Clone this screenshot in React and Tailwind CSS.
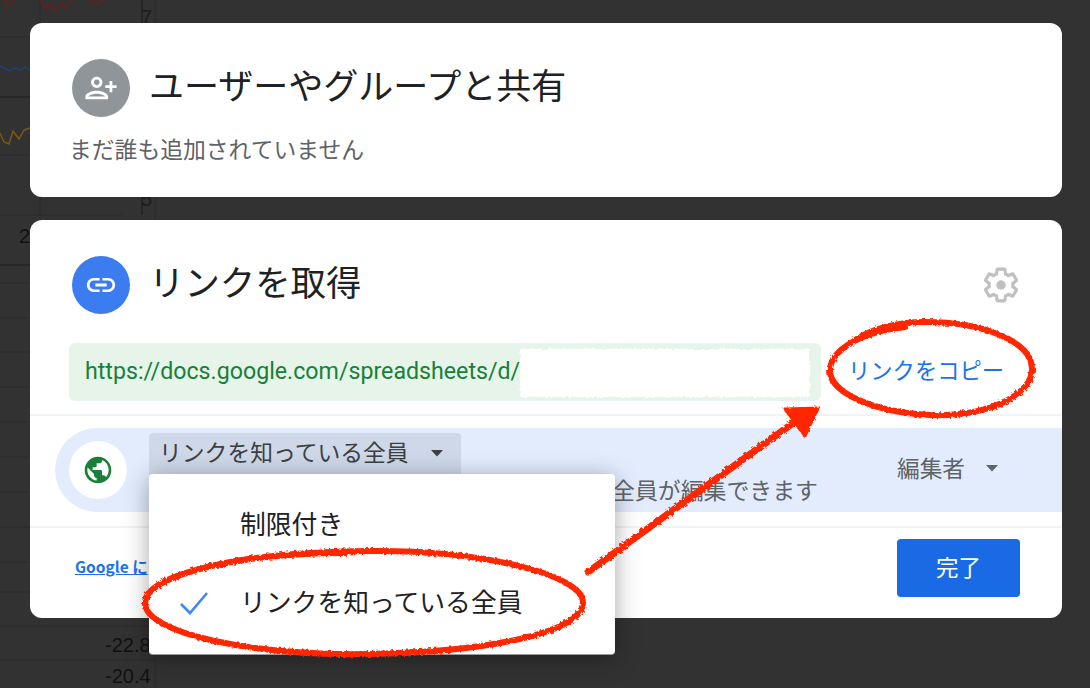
import React from "react";

const CJK = "font-['Noto_Sans_CJK_JP','Noto_Sans_CJK_SC',sans-serif]";

function Backdrop() {
  return (
    <svg className="absolute left-0 top-0" width="160" height="688" viewBox="0 0 160 688">
      <g stroke="#2a2a2a" strokeWidth="1">
        <line x1="0" y1="37" x2="142" y2="37" />
        <line x1="0" y1="155" x2="142" y2="155" />
        <line x1="40" y1="0" x2="40" y2="215" />
        <line x1="0" y1="215" x2="122" y2="215" />
        {[283, 318, 352, 387, 422, 457, 492, 527, 562, 592, 626, 660].map((y) => (
          <line key={y} x1="0" y1={y} x2="155" y2={y} />
        ))}
      </g>
      <line x1="0" y1="97" x2="142" y2="97" stroke="#1c1c1c" strokeWidth="1" />
      <line x1="0" y1="265" x2="155" y2="265" stroke="#1c1c1c" strokeWidth="1" />
      <line x1="142" y1="0" x2="142" y2="215" stroke="#222" strokeWidth="1.5" />
      <line x1="155" y1="0" x2="155" y2="688" stroke="#2a2a2a" strokeWidth="1" />
      <path d="M4 0 L9 6 L14 0 M40 0 L46 9 L50 4 L54 12 L60 3 L66 8 L72 0 M90 0 L96 4 L104 0" fill="none" stroke="#6b1f1a" strokeWidth="1.5" />
      <path d="M0 66 L5 68 L10 71 L15 68 L20 70 L25 67 L30 70" fill="none" stroke="#1d3f7a" strokeWidth="1.5" />
      <path d="M0 133 L4 142 L9 144 L13 131 L19 139 L24 130 L30 128" fill="none" stroke="#7a5a10" strokeWidth="1.5" />
    </svg>
  );
}

function Circle({ color, d, flip }) {
  return (
    <div className={`w-[58px] h-[58px] rounded-full flex items-center justify-center shrink-0 ${color}`}>
      <svg width="34" height="34" viewBox="0 0 24 24" fill="#fff" className={flip ? "-scale-x-100" : ""}>
        <path d={d} />
      </svg>
    </div>
  );
}

function Caret({ color }) {
  return (
    <svg width="14" height="8" viewBox="0 0 14 8">
      <path d="M1 1h12l-6 6.5z" fill={color} />
    </svg>
  );
}

function Annotations() {
  return (
    <svg className="absolute left-0 top-0 pointer-events-none" width="1090" height="688" viewBox="0 0 1090 688">
      <defs>
        <filter id="rough" x="-5%" y="-5%" width="110%" height="110%">
          <feTurbulence type="fractalNoise" baseFrequency="0.35" numOctaves="2" seed="4" />
          <feDisplacementMap in="SourceGraphic" scale="4" />
        </filter>
      </defs>
      <g filter="url(#rough)" fill="none" stroke="#ff2600" strokeWidth="6" strokeLinecap="round">
        <path d="M905 327 C860 332 831 350 830 370 C829 391 870 412 930 415 C990 417 1033 394 1032 368 C1031 342 985 322 925 322 C895 322 870 330 855 340" />
        <path d="M345 553 C240 553 145 575 145 603 C145 633 250 656 370 654 C490 652 584 632 583 602 C582 574 480 550 370 551 C300 552 230 558 190 572" />
        <path d="M588 572 L800 418" strokeWidth="7" />
        <path d="M785 409 L818 408 L805 436 Z" fill="#ff2600" strokeWidth="3" />
      </g>
      <g filter="url(#rough)">
        <rect x="520" y="349" width="290" height="48" fill="#fff" />
      </g>
    </svg>
  );
}

export default function App() {
  return (
    <div className={`relative w-[1090px] h-[688px] overflow-hidden bg-[#323232] ${CJK}`}>
      <Backdrop />
      <div className="absolute left-[141px] top-[5px] leading-[24px] text-[#1c1c1c] text-[20px] font-['Liberation_Sans',sans-serif]">7</div>
      <div className="absolute left-[141px] top-[187px] leading-[24px] text-[#1c1c1c] text-[20px] font-['Liberation_Sans',sans-serif]">5</div>
      <div className="absolute left-[19px] top-[224px] leading-[24px] text-[#111] text-[20px] font-['Liberation_Sans',sans-serif]">2</div>
      <div className="absolute left-[105px] top-[633px] leading-[24px] text-[#111] text-[20px] font-['Liberation_Sans',sans-serif]">-22.8</div>
      <div className="absolute left-[105px] top-[664px] leading-[24px] text-[#111] text-[20px] font-['Liberation_Sans',sans-serif]">-20.4</div>

      <div className="relative flex flex-col gap-[23px] pt-[23px] pl-[30px] w-[1062px]">
        <section className="h-[174px] bg-white rounded-[12px] pt-[36px] px-[42px]">
          <div className="flex items-center gap-[20px]">
            <Circle
              color="bg-[#909599]"
              flip
              d="M15 12c2.21 0 4-1.79 4-4s-1.79-4-4-4-4 1.79-4 4 1.79 4 4 4zm0-6c1.1 0 2 .9 2 2s-.9 2-2 2-2-.9-2-2 .9-2 2-2zm0 8c-2.67 0-8 1.34-8 4v2h16v-2c0-2.66-5.33-4-8-4zm-6 4c.22-.72 3.31-2 6-2 2.7 0 5.8 1.29 6 2H9zm-3-3v-3h3v-2H6V7H4v3H1v2h3v3h2z"
            />
            <h2 className="-mt-[8px] -ml-[1px] text-[35px] leading-[58px] text-[#202124] whitespace-nowrap">ユーザーやグループと共有</h2>
          </div>
          <p className="mt-[15px] -ml-[3px] text-[22.8px] leading-[34px] text-[#5f6368] whitespace-nowrap">まだ誰も追加されていません</p>
        </section>

        <section className="h-[398px] bg-white rounded-[12px] pt-[36px]">
          <div className="flex items-center gap-[20px] pl-[42px] pr-[42px]">
            <Circle
              color="bg-[#3b7cf0]"
              d="M3.9 12c0-1.71 1.39-3.1 3.1-3.1h4V7H7c-2.76 0-5 2.24-5 5s2.24 5 5 5h4v-1.9H7c-1.71 0-3.1-1.39-3.1-3.1zM8 13h8v-2H8v2zm9-6h-4v1.9h4c1.71 0 3.1 1.39 3.1 3.1s-1.39 3.1-3.1 3.1h-4V17h4c2.76 0 5-2.24 5-5s-2.24-5-5-5z"
            />
            <h2 className="flex-1 -mt-[8px] -ml-[1px] text-[35.4px] leading-[58px] text-[#202124] whitespace-nowrap">リンクを取得</h2>
            <svg width="38" height="38" viewBox="0 0 24 24" fill="none" stroke="#c0c0c0" strokeWidth="2">
              <path d="M19.43 12.98c.04-.32.07-.64.07-.98s-.03-.66-.07-.98l2.11-1.65c.19-.15.24-.42.12-.64l-2-3.46c-.12-.22-.39-.3-.61-.22l-2.49 1c-.52-.4-1.08-.73-1.69-.98l-.38-2.65C14.46 2.18 14.25 2 14 2h-4c-.25 0-.46.18-.49.42l-.38 2.65c-.61.25-1.17.59-1.69.98l-2.49-1c-.23-.09-.49 0-.61.22l-2 3.46c-.13.22-.07.49.12.64l2.11 1.65c-.04.32-.07.65-.07.98s.03.66.07.98l-2.11 1.65c-.19.15-.24.42-.12.64l2 3.46c.12.22.39.3.61.22l2.49-1c.52.4 1.08.73 1.69.98l.38 2.65c.03.24.24.42.49.42h4c.25 0 .46-.18.49-.42l.38-2.65c.61-.25 1.17-.59 1.69-.98l2.49 1c.23.09.49 0 .61-.22l2-3.46c.12-.22.07-.49-.12-.64l-2.11-1.65z" />
              <circle cx="12" cy="12" r="3" fill="#c0c0c0" stroke="none" />
            </svg>
          </div>

          <div className="flex items-center mt-[29px] pl-[39px]">
            <div className="w-[752px] h-[58px] bg-[#e6f4ea] rounded-[6px] flex items-center pl-[16px] pb-[1px] text-[23.2px] text-[#188038] font-['Roboto',sans-serif] whitespace-nowrap">
              https://docs.google.com/spreadsheets/d/
            </div>
            <div className="ml-[27px] -mt-[4px] text-[22.3px] text-[#1a73e8] whitespace-nowrap">リンクをコピー</div>
          </div>

          <div className="mt-[13px] h-[2px] bg-[#f1f3f4]" />

          <div className="mt-[12px] ml-[25px] h-[84px] bg-[#e2ecfc] rounded-l-[42px] flex relative">
            <div className="ml-[14px] mt-[13px] w-[58px] h-[58px] rounded-full bg-white flex items-center justify-center shrink-0">
              <svg width="32" height="32" viewBox="0 0 24 24" fill="#188038">
                <path d="M12 2C6.48 2 2 6.48 2 12s4.48 10 10 10 10-4.48 10-10S17.52 2 12 2zm-1 17.93c-3.95-.49-7-3.85-7-7.93 0-.62.08-1.21.21-1.79L9 15v1c0 1.1.9 2 2 2v1.93zm6.9-2.54c-.26-.81-1-1.39-1.9-1.39h-1v-3c0-.55-.45-1-1-1H8v-2h2c.55 0 1-.45 1-1V7h2c1.1 0 2-.9 2-2v-.41c2.93 1.19 5 4.06 5 7.41 0 2.08-.8 3.97-2.1 5.39z" />
              </svg>
            </div>
            <div className="ml-[22px] w-[463px] shrink-0">
              <div className="mt-[5px] w-[312px] h-[41px] bg-[#ced8e8] rounded-t-[4px] flex items-center pl-[10px] pb-[2px] gap-[21px] text-[22.8px] text-[#3c4043] whitespace-nowrap">
                <span>リンクを知っている全員</span>
                <Caret color="#3c4043" />
              </div>
              <div className="text-[22.9px] leading-[30px] text-[#5f6368] whitespace-nowrap pl-[463px]">
                <span>全員が編集できます</span>
              </div>
            </div>
            <div className="ml-[285px] self-center flex items-center gap-[20px] text-[22.7px] text-[#5f6368] whitespace-nowrap -mt-[3px]">
              <span>編集者</span>
              <Caret color="#5f6368" />
            </div>
          </div>

          <div className="mt-[14px] h-[2px] bg-[#f1f3f4]" />

          <div className="flex items-center justify-between pl-[45px] pr-[42px] mt-[11px]">
            <a className="-mt-[2px] text-[15.5px] font-semibold text-[#1a73e8] underline whitespace-nowrap">Google に</a>
            <button className="w-[123px] h-[58px] pb-[3px] bg-[#1a6ae6] rounded-[4px] text-white text-[22.5px]">完了</button>
          </div>
        </section>
      </div>

      <div className="absolute left-[149px] top-[474px] w-[466px] h-[181px] bg-white rounded-[4px] border-b border-[#9a9a9a] shadow-[0_4px_24px_rgba(0,0,0,0.35)] flex flex-col text-[25.8px] text-[#202124]">
        <div className="h-[99px] pl-[91px] flex items-center whitespace-nowrap">制限付き</div>
        <div className="flex items-center whitespace-nowrap pl-[31px] gap-[32px] mt-[9px]">
          <svg width="28" height="24" viewBox="0 0 28 24" fill="none" stroke="#4285f4" strokeWidth="2.6" className="mt-[4px]">
            <path d="M1 13 L10 22 L27 2" />
          </svg>
          <span>リンクを知っている全員</span>
        </div>
      </div>

      <Annotations />
    </div>
  );
}
